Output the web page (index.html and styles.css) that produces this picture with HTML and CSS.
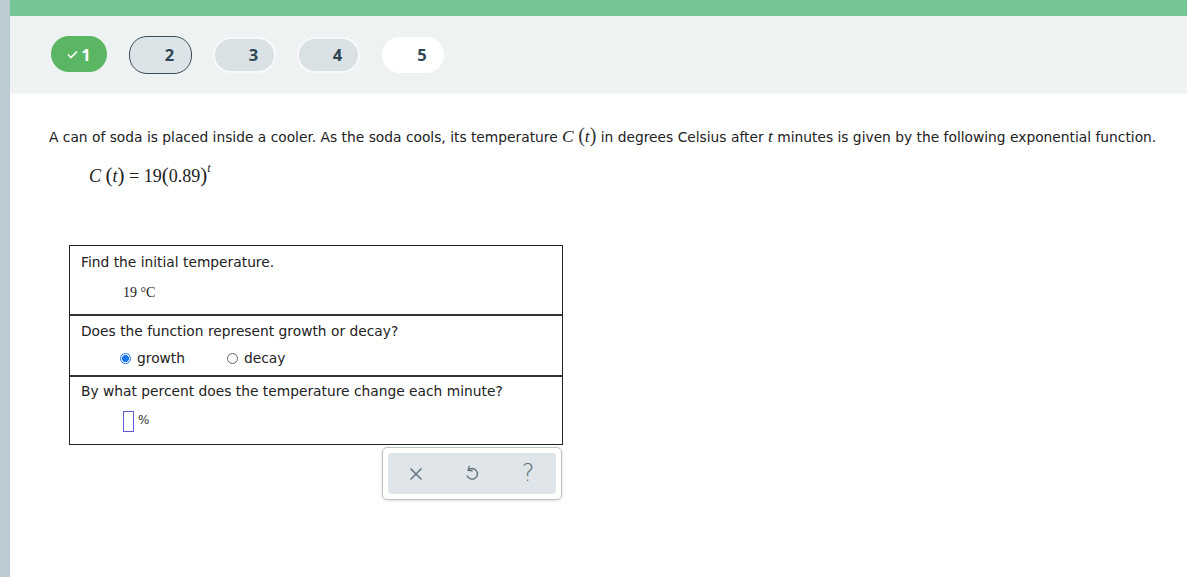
FILE: index.html
```html
<!DOCTYPE html>
<html>
<head>
<meta charset="utf-8">
<link rel="stylesheet" href="styles.css">
</head>
<body>
<div class="page">
  <div class="rail"></div>
  <div class="main">
    <div class="topbar"></div>
    <div class="steps">
      <div class="pill done"><svg class="chk" width="11" height="9" viewBox="0 0 11 9"><path d="M1 4.5 L4 7.5 L10 1.5" fill="none" stroke="#fff" stroke-width="1.6"/></svg>1</div>
      <div class="pill current">2</div>
      <div class="pill todo">3</div>
      <div class="pill todo">4</div>
      <div class="pill blank">5</div>
    </div>
    <div class="content">
      <p class="stem">A can of soda is placed inside a cooler. As the soda cools, its temperature <span class="m">C</span> <span class="paren">(</span><span class="m">t</span><span class="paren">)</span> in degrees Celsius after <span class="m">t</span> minutes is given by the following exponential function.</p>
      <div class="formula"><span class="mi">C</span> <span class="pb">(</span><span class="mi">t</span><span class="pb">)</span> = 19<span class="pb">(</span>0.89<span class="pb">)</span><sup class="mi">t</sup></div>
      <div class="qtable">
        <div class="row r1">
          <div class="q">Find the initial temperature.</div>
          <div class="ans serif">19 °C</div>
        </div>
        <div class="row r2">
          <div class="q">Does the function represent growth or decay?</div>
          <div class="radios">
            <label class="opt"><span class="radio on"></span>growth</label>
            <label class="opt"><span class="radio"></span>decay</label>
          </div>
        </div>
        <div class="row r3">
          <div class="q">By what percent does the temperature change each minute?</div>
          <div class="ans pct"><span class="box"></span><span class="pctsign">%</span></div>
        </div>
      </div>
      <div class="tools">
        <div class="toolsin">
          <span class="slot"><svg width="14" height="14" viewBox="0 0 14 14"><path d="M1.5 1.5 L12.5 12.5 M12.5 1.5 L1.5 12.5" stroke="#5f7480" stroke-width="1.5" fill="none"/></svg></span>
          <span class="slot"><svg width="14" height="17" viewBox="0 0 14 17"><path d="M4.2 1.5 L3.2 5.2 L7 5.8" fill="none" stroke="#5f7480" stroke-width="1.4" stroke-linejoin="round" stroke-linecap="round"/><path d="M3.4 5.1 A5.3 5.3 0 1 1 2.3 11" fill="none" stroke="#5f7480" stroke-width="1.4" stroke-linecap="round"/></svg></span>
          <span class="slot help">?</span>
        </div>
      </div>
    </div>
  </div>
</div>
</body>
</html>
```
FILE: styles.css
```css
html, body { margin: 0; padding: 0; background: #fff; }
body { font-family: "DejaVu Sans", Verdana, sans-serif; color: #222; }
.page { display: flex; width: 1187px; height: 577px; overflow: hidden; }
.rail { width: 10px; flex: none; background: #bccbd2; }
.main { flex: 1; display: flex; flex-direction: column; }
.topbar { height: 16px; background: #74c696; flex: none; }
.steps { height: 77px; background: #eef2f3; display: flex; align-items: center; padding-left: 41px; gap: 22px; flex: none; border-bottom: 1px solid #f4f6f7; }
.pill { height: 36px; width: 62px; box-sizing: border-box; border-radius: 18px; display: flex; align-items: center; justify-content: center; padding-left: 18px; font-family: "Open Sans", sans-serif; font-weight: 700; font-size: 16.5px; color: #2f4755; }
.pill.done { width: 56px; background: #5bb664; color: #fff; padding-left: 0; gap: 3px; margin-top: -1px; }
.pill.done .chk { margin-top: 1px; }
.pill.current { height: 38px; width: 63px; background: #dde4e7; border: 1px solid #3a4c56; }
.pill.todo { width: 63px; margin-left: -1px; background: #dae1e4; border: 2px solid #f7f9fa; }
.pill.blank { background: #fff; }
.content { padding: 0 0 0 39px; }
.stem { margin: 31px 0 0; font-size: 13.8px; line-height: 20px; color: #222; white-space: nowrap; }
.stem .m { font-family: "Liberation Serif", serif; font-style: italic; font-size: 17.5px; }
.stem .paren { font-family: "Liberation Serif", serif; font-size: 20px; color: #333; }
.formula { margin: 9px 0 0 40px; font-family: "Liberation Serif", serif; font-size: 18px; color: #222; height: 24px; line-height: 24px; }
.formula .mi { font-style: italic; }
.formula .pb { font-size: 21px; }
.formula sup { font-size: 12px; vertical-align: 10px; }
.qtable { margin: 65px 0 0 20px; width: 494px; border: 1px solid #222; box-sizing: border-box; }
.row { border-top: 2px solid #333; box-sizing: border-box; padding-left: 11px; }
.row.r1 { border-top: none; height: 68px; padding-top: 7px; }
.row.r2 { height: 61px; padding-top: 6px; }
.row.r3 { height: 69px; padding-top: 5px; }
.q { font-size: 13.8px; line-height: 18px; color: #222; }
.ans { margin-left: 42px; }
.serif { font-family: "Liberation Serif", serif; font-size: 14px; margin-top: 14px; color: #222; }
.radios { display: flex; margin-left: 39px; margin-top: 10px; gap: 42px; font-size: 13.8px; }
.opt { display: flex; align-items: center; gap: 6px; }
.radio { width: 11px; height: 11px; border: 1px solid #666; border-radius: 50%; box-sizing: border-box; display: inline-block; background: #fff; }
.radio.on { border: 1px solid #1a73e8; background: radial-gradient(circle, #1a73e8 0 3.2px, #fff 3.8px); }
.pct { display: flex; align-items: center; margin-top: 11px; margin-left: 42px; }
.box { width: 11px; height: 21px; box-sizing: border-box; border: 1.5px solid #5c5cd6; display: inline-block; }
.pctsign { font-size: 12px; margin-left: 4px; margin-top: -3px; color: #333; }
.tools { margin: 2px 0 0 333px; width: 180px; height: 53px; box-sizing: border-box; border: 1px solid #b7c3c9; border-radius: 5px; padding: 5px; box-shadow: 0 1px 3px rgba(0,0,0,0.12); background: #fff; }
.toolsin { height: 41px; background: #dfe5e8; border-radius: 3px; display: flex; align-items: center; }
.slot { width: 56px; display: flex; justify-content: center; align-items: center; }
.help { font-family: "DejaVu Sans", sans-serif; font-size: 24px; color: #5f7480; font-weight: 300; margin-top: -2px; }
```
